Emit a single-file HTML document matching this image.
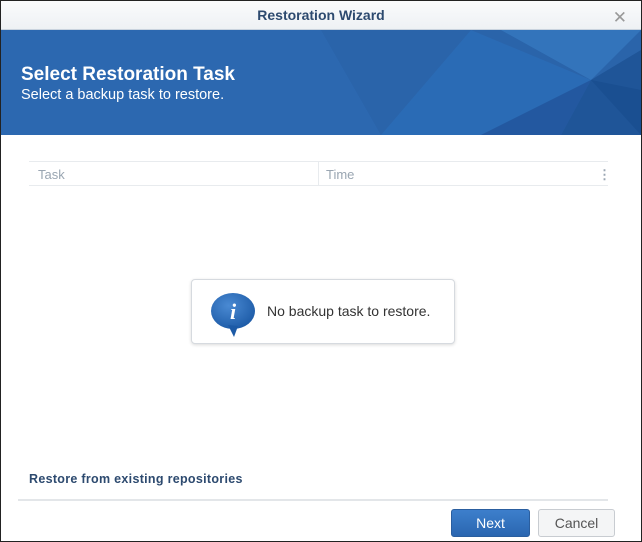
<!DOCTYPE html>
<html><head><meta charset="utf-8"><style>
*{margin:0;padding:0;box-sizing:border-box}
body{width:642px;height:542px;overflow:hidden;background:#fff;font-family:"Liberation Sans",sans-serif;position:relative;border:1px solid #222}
.title{position:absolute;left:0;top:0;width:640px;height:29px;background:linear-gradient(#fafbfc,#eef1f4);text-align:center;font-size:14px;font-weight:bold;color:#2d4a6f;line-height:28px;border-bottom:1px solid #c9d3de}
.x{position:absolute;right:14px;top:3px;font-size:17px;color:#999;font-weight:normal}
.banner{position:absolute;left:0;top:29px;width:640px;height:105px;background:#2c68b0;overflow:hidden}
.banner h1{position:absolute;left:20px;top:34px;font-size:19px;color:#fff;font-weight:bold}
.banner p{position:absolute;left:20px;top:57px;font-size:14.5px;color:#fff}
.th{position:absolute;top:160px;left:28px;width:579px;height:25px;border-top:1px solid #e8ebee;border-bottom:1px solid #e8ebee;font-size:13px;color:#9aa6b2}
.th span{position:absolute;top:5px}
.box{position:absolute;left:190px;top:278px;width:264px;height:65px;border:1px solid #d6dadf;border-radius:4px;box-shadow:0 1px 3px rgba(0,0,0,.15);background:#fff}
.box .t{position:absolute;left:75px;top:23px;font-size:14px;color:#333}
.link{position:absolute;left:28px;top:471px;font-size:12.5px;font-weight:bold;color:#2d4a6f;letter-spacing:.3px}
.sep{position:absolute;left:17px;top:498px;width:590px;height:2px;background:#e3e6e9}
.btn{position:absolute;top:508px;height:28px;border-radius:3px;font-size:14px;text-align:center;line-height:27px}
</style></head><body>
<div class="title">Restoration Wizard<span class="x">✕</span></div>
<div class="banner">
<svg width="640" height="105" style="position:absolute;left:0;top:0">
<polygon points="320,0 640,0 640,105 380,105" fill="#2a64aa"/>
<polygon points="470,0 590,50 480,105 380,105" fill="#2b6db8" opacity=".8"/>
<polygon points="500,0 640,0 590,50" fill="#3678bf" opacity=".8"/>
<polygon points="590,50 640,20 640,105 560,105" fill="#1f5598"/>
<polygon points="590,50 480,105 560,105" fill="#2358a0"/>
<polygon points="590,50 640,60 640,105" fill="#1a4f91"/>
</svg>
<h1>Select Restoration Task</h1><p>Select a backup task to restore.</p></div>
<div class="th"><span style="left:9px">Task</span><span style="left:289px;top:0;height:24px;border-left:1px solid #e8ebee"></span><span style="left:297px">Time</span><span style="left:569px;font-weight:bold">⋮</span></div>
<div class="box">
<svg width="50" height="46" style="position:absolute;left:18px;top:12px" viewBox="0 0 50 46">
<defs><radialGradient id="g" cx=".4" cy=".35" r=".7"><stop offset="0" stop-color="#4a8ad3"/><stop offset="1" stop-color="#1c5aa6"/></radialGradient></defs>
<ellipse cx="23" cy="19" rx="22" ry="18" fill="url(#g)"/><path d="M18 33 L24 45 L28 34Z" fill="#1c5aa6"/>
<text x="23" y="27" text-anchor="middle" font-family="Liberation Serif" font-style="italic" font-weight="bold" font-size="22" fill="#fff">i</text>
</svg>
<span class="t">No backup task to restore.</span></div>
<div class="link">Restore from existing repositories</div>
<div class="sep"></div>
<div class="btn" style="left:450px;width:79px;background:linear-gradient(#3d7fcc,#2a66b0);color:#fff;border:1px solid #2a5e9f">Next</div>
<div class="btn" style="left:537px;width:77px;background:#f4f5f6;color:#555;border:1px solid #c8ccd1">Cancel</div>
</body></html>
